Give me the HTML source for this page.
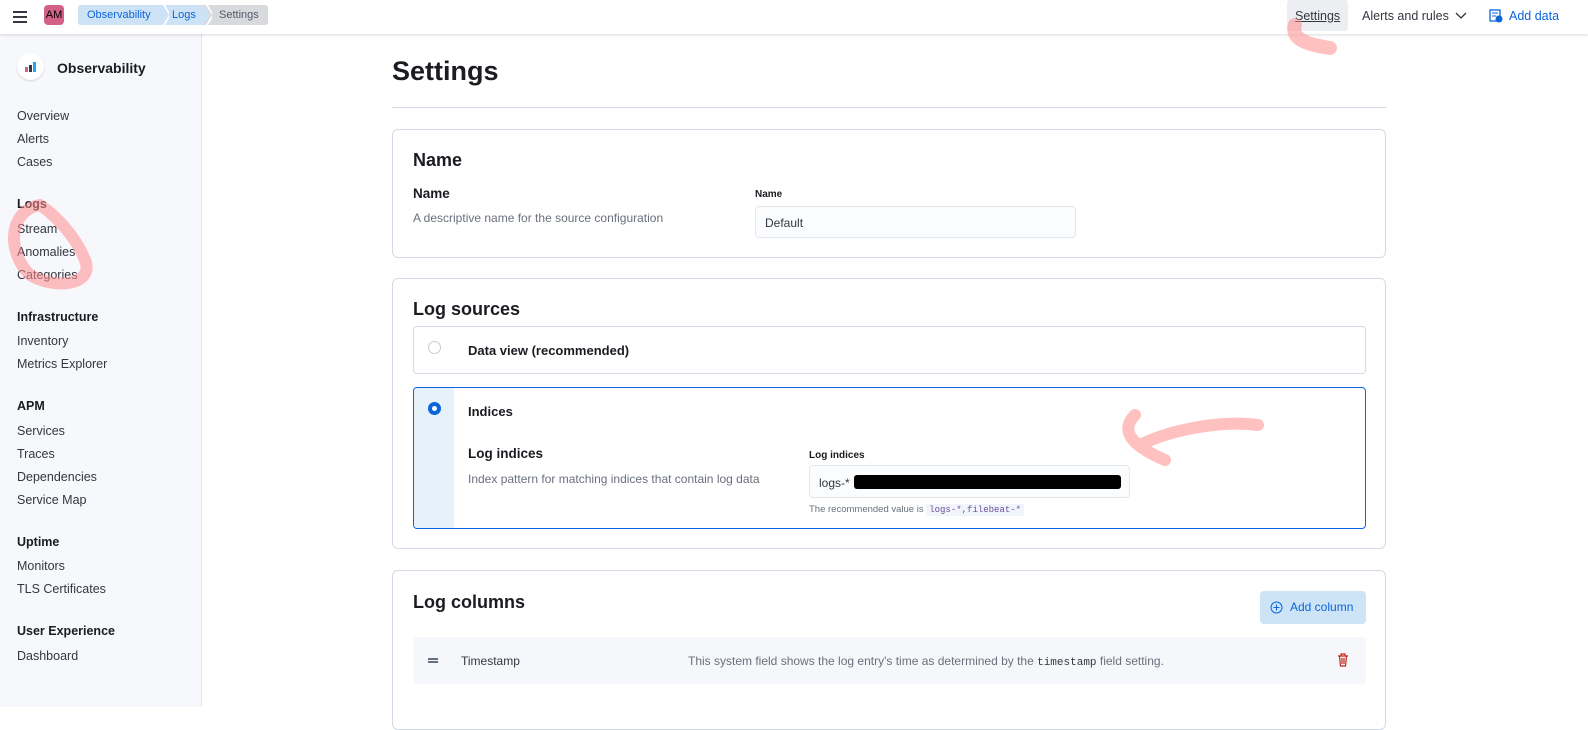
<!DOCTYPE html>
<html><head><meta charset="utf-8"><style>
*{box-sizing:border-box;margin:0;padding:0}
body{width:1588px;height:707px;overflow:hidden;font-family:"Liberation Sans",sans-serif;background:#fff;color:#1a1c21;position:relative;font-size:13px}
.hdr{position:absolute;left:0;top:0;width:1588px;height:34px;background:#fff;box-shadow:0 1px 3px rgba(0,0,0,.15);z-index:3}
.side{position:absolute;left:0;top:34px;width:202px;height:673px;background:#f7f8fc;border-right:1px solid #e3e6ed}
.side div{position:absolute;left:17px;font-size:12.5px;color:#343741}
.side .h{font-weight:bold;color:#1a1c21}
.a{position:absolute}
.panel{position:absolute;left:392px;width:994px;border:1px solid #d3dae6;border-radius:6px;background:#fff}
h2{font-size:18px;font-weight:bold;position:absolute}
.mono{font-family:"Liberation Mono",monospace}
</style></head><body>
<div class="hdr">
 <div class="a" style="left:13px;top:11px;width:14px;height:2px;background:#343741;box-shadow:0 5px 0 #343741,0 10px 0 #343741"></div>
 <div class="a" style="left:44px;top:5px;width:20px;height:20px;background:#d36086;border-radius:4px;color:#000;font-size:11px;line-height:20px;text-align:center">AM</div>
 <div class="a" style="left:78px;top:5px;width:190px;height:20px;background:#d9dadd;border-radius:3px"></div>
 <div class="a" style="left:78px;top:5px;width:132px;height:20px;background:#cde3f5;border-radius:3px 0 0 3px;clip-path:polygon(0 0,125px 0,132px 50%,125px 100%,0 100%)"></div>
 <div class="a" style="left:87px;top:9px;font-size:11px;color:#0b64dd">Observability</div>
 <div class="a" style="left:163px;top:5px;width:6px;height:20px;background:#fff;clip-path:polygon(0 0,2px 0,8px 50%,2px 100%,0 100%,6px 50%)"></div>
 <div class="a" style="left:206px;top:5px;width:6px;height:20px;background:#fff;clip-path:polygon(0 0,2px 0,8px 50%,2px 100%,0 100%,6px 50%)"></div>
 <div class="a" style="left:172px;top:9px;font-size:11px;color:#0b64dd">Logs</div>
 <div class="a" style="left:219px;top:9px;font-size:11px;color:#535966">Settings</div>
 <div class="a" style="left:1287px;top:0;width:61px;height:31px;background:#eceef2;border-radius:3px"></div>
 <div class="a" style="left:1295px;top:9px;font-size:12.5px;color:#343741;text-decoration:underline">Settings</div>
 <div class="a" style="left:1362px;top:9px;font-size:12.5px;color:#343741">Alerts and rules</div>
 <svg class="a" style="left:1455px;top:11px" width="12" height="10"><path d="M1 2l5 5 5-5" fill="none" stroke="#343741" stroke-width="1.3"/></svg>
 <svg class="a" style="left:1489px;top:9px" width="14" height="14"><rect x="1" y="1" width="10" height="11" fill="none" stroke="#0b64dd" stroke-width="1.3"/><path d="M3 4h6M3 7h4" stroke="#0b64dd"/><circle cx="10" cy="10" r="3.5" fill="#0b64dd"/></svg>
 <div class="a" style="left:1509px;top:9px;font-size:12.5px;color:#0b64dd">Add data</div>
</div>
<div class="side">
 <div class="a" style="left:17px;top:19px;width:27px;height:27px;border-radius:50%;background:#fff;box-shadow:0 1px 2px rgba(0,0,0,.15)"></div>
 <svg class="a" style="left:24px;top:27px" width="14" height="12"><rect x="1" y="6" width="3" height="5" fill="#d36086"/><rect x="5" y="4" width="3" height="7" fill="#343741"/><rect x="9" y="1" width="3" height="10" fill="#1ba9f5"/></svg>
 <div class="h" style="left:57px;top:26px;font-size:14px">Observability</div>
 <div style="top:75px">Overview</div><div style="top:98px">Alerts</div><div style="top:121px">Cases</div>
 <div class="h" style="top:163px">Logs</div><div style="top:188px">Stream</div><div style="top:211px">Anomalies</div><div style="top:234px">Categories</div>
 <div class="h" style="top:276px">Infrastructure</div><div style="top:300px">Inventory</div><div style="top:323px">Metrics Explorer</div>
 <div class="h" style="top:365px">APM</div><div style="top:390px">Services</div><div style="top:413px">Traces</div><div style="top:436px">Dependencies</div><div style="top:459px">Service Map</div>
 <div class="h" style="top:501px">Uptime</div><div style="top:525px">Monitors</div><div style="top:548px">TLS Certificates</div>
 <div class="h" style="top:590px">User Experience</div><div style="top:615px">Dashboard</div>
</div>
<div class="a" style="left:392px;top:56px;font-size:27px;font-weight:bold">Settings</div>
<div class="a" style="left:392px;top:107px;width:994px;height:1px;background:#d3dae6"></div>
<div class="panel" style="top:129px;height:129px">
 <h2 style="left:20px;top:20px">Name</h2>
 <div class="a" style="left:20px;top:56px;font-weight:bold;font-size:13.5px">Name</div>
 <div class="a" style="left:20px;top:81px;color:#69707d;font-size:12px">A descriptive name for the source configuration</div>
 <div class="a" style="left:362px;top:59px;font-weight:bold;font-size:10px">Name</div>
 <div class="a" style="left:362px;top:76px;width:321px;height:32px;background:#fbfcfd;border:1px solid #e4e7ed;border-radius:4px;padding:9px;font-size:12px;color:#343741">Default</div>
</div>
<div class="panel" style="top:278px;height:271px">
 <h2 style="left:20px;top:20px">Log sources</h2>
 <div class="a" style="left:20px;top:47px;width:953px;height:48px;border:1px solid #d3dae6;border-radius:4px">
  <div class="a" style="left:14px;top:14px;width:13px;height:13px;border-radius:50%;border:1px solid #c9ccd3;background:#fff"></div>
  <div class="a" style="left:54px;top:16px;font-weight:bold;font-size:13px">Data view (recommended)</div>
 </div>
 <div class="a" style="left:20px;top:108px;width:953px;height:142px;border:1px solid #0b64dd;border-radius:4px;overflow:hidden">
  <div class="a" style="left:0;top:0;width:40px;height:142px;background:#e6f1fa"></div>
  <div class="a" style="left:14px;top:14px;width:13px;height:13px;border-radius:50%;background:#0b64dd"><div style="margin:4px;width:5px;height:5px;border-radius:50%;background:#fff"></div></div>
  <div class="a" style="left:54px;top:16px;font-weight:bold;font-size:13px">Indices</div>
  <div class="a" style="left:54px;top:58px;font-weight:bold;font-size:13.5px">Log indices</div>
  <div class="a" style="left:54px;top:84px;color:#69707d;font-size:12px">Index pattern for matching indices that contain log data</div>
  <div class="a" style="left:395px;top:62px;font-weight:bold;font-size:10px">Log indices</div>
  <div class="a" style="left:395px;top:77px;width:321px;height:33px;background:#fbfcfd;border:1px solid #e4e7ed;border-radius:4px;padding:10px 9px;font-size:12px;color:#343741">logs-*</div>
  <div class="a" style="left:440px;top:87px;width:267px;height:14px;background:#000;border-radius:3px"></div>
  <div class="a" style="left:395px;top:116px;font-size:9.5px;color:#69707d">The recommended value is <span class="mono" style="background:#f1f4fa;color:#6c4f9c;padding:1px 3px;font-size:9px">logs-*,filebeat-*</span></div>
 </div>
</div>
<div class="panel" style="top:570px;height:160px">
 <h2 style="left:20px;top:21px">Log columns</h2>
 <div class="a" style="left:867px;top:20px;width:106px;height:33px;background:#cce4f5;border-radius:4px;color:#0b64dd;font-size:12px;padding:9px 0 0 30px">Add column</div>
 <svg class="a" style="left:877px;top:30px" width="13" height="13"><circle cx="6.5" cy="6.5" r="5.5" fill="none" stroke="#0b64dd"/><path d="M6.5 3.5v6M3.5 6.5h6" stroke="#0b64dd"/></svg>
 <div class="a" style="left:20px;top:66px;width:953px;height:47px;background:#f5f7fa;border-radius:4px">
  <div class="a" style="left:15px;top:21px;width:10px;height:1.5px;background:#69707d;box-shadow:0 3px 0 #69707d"></div>
  <div class="a" style="left:48px;top:17px;font-size:12px;color:#343741">Timestamp</div>
  <div class="a" style="left:275px;top:17px;font-size:12px;color:#69707d">This system field shows the log entry's time as determined by the <span class="mono" style="font-size:11px;color:#343741">timestamp</span> field setting.</div>
  <svg class="a" style="left:924px;top:16px" width="12" height="14"><path d="M1 3h10M4 3V1h4v2M2.5 3l1 10h5l1-10M5 5v6M7 5v6" fill="none" stroke="#bd271e" stroke-width="1.2"/></svg>
 </div>
</div>
<svg class="a" style="left:0;top:0;z-index:5" width="1588" height="707">
 <g fill="none" stroke="#ff8d8d" stroke-opacity=".55" stroke-linecap="round">
  <path d="M40 205C10 210 5 250 30 275C55 290 95 285 85 260C75 235 55 215 40 205" stroke-width="12"/>
  <path d="M1295 25C1290 40 1310 45 1330 48" stroke-width="14"/>
  <path d="M1258 425C1220 420 1170 430 1140 445M1135 415C1120 430 1130 445 1165 460" stroke-width="12"/>
 </g>
</svg>
</body></html>
